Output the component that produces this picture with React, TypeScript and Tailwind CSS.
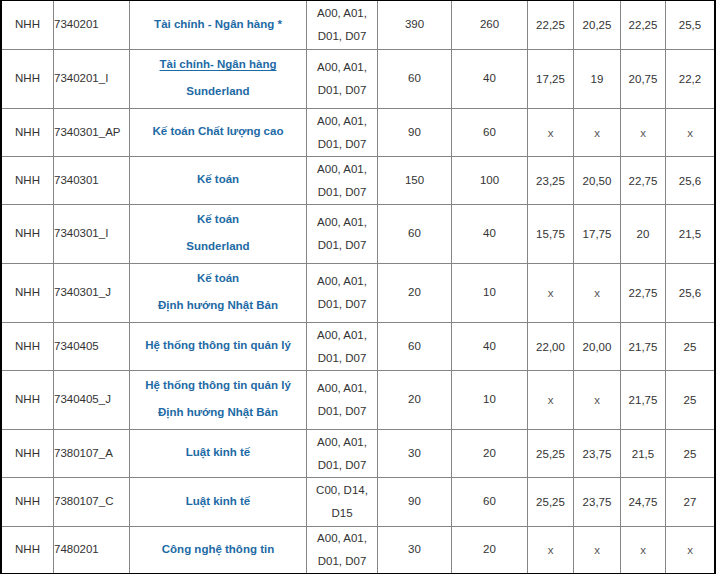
import React from "react";

type Row = {
  code: string;
  title: string[];
  underline?: boolean;
  combo: string[];
  quota: string;
  quota2: string;
  scores: string[];
  h: string;
};

const rows: Row[] = [
  { code: "7340201", title: ["Tài chính - Ngân hàng *"], combo: ["A00, A01,", "D01, D07"], quota: "390", quota2: "260", scores: ["22,25", "20,25", "22,25", "25,5"], h: "h-[49px]" },
  { code: "7340201_I", title: ["Tài chính- Ngân hàng", "Sunderland"], underline: true, combo: ["A00, A01,", "D01, D07"], quota: "60", quota2: "40", scores: ["17,25", "19", "20,75", "22,2"], h: "h-[59px]" },
  { code: "7340301_AP", title: ["Kế toán Chất lượng cao"], combo: ["A00, A01,", "D01, D07"], quota: "90", quota2: "60", scores: ["x", "x", "x", "x"], h: "h-[48px]" },
  { code: "7340301", title: ["Kế toán"], combo: ["A00, A01,", "D01, D07"], quota: "150", quota2: "100", scores: ["23,25", "20,50", "22,75", "25,6"], h: "h-[48px]" },
  { code: "7340301_I", title: ["Kế toán", "Sunderland"], combo: ["A00, A01,", "D01, D07"], quota: "60", quota2: "40", scores: ["15,75", "17,75", "20", "21,5"], h: "h-[59px]" },
  { code: "7340301_J", title: ["Kế toán", "Định hướng Nhật Bản"], combo: ["A00, A01,", "D01, D07"], quota: "20", quota2: "10", scores: ["x", "x", "22,75", "25,6"], h: "h-[59px]" },
  { code: "7340405", title: ["Hệ thống thông tin quản lý"], combo: ["A00, A01,", "D01, D07"], quota: "60", quota2: "40", scores: ["22,00", "20,00", "21,75", "25"], h: "h-[48px]" },
  { code: "7340405_J", title: ["Hệ thống thông tin quản lý", "Định hướng Nhật Bản"], combo: ["A00, A01,", "D01, D07"], quota: "20", quota2: "10", scores: ["x", "x", "21,75", "25"], h: "h-[59px]" },
  { code: "7380107_A", title: ["Luật kinh tế"], combo: ["A00, A01,", "D01, D07"], quota: "30", quota2: "20", scores: ["25,25", "23,75", "21,5", "25"], h: "h-[48px]" },
  { code: "7380107_C", title: ["Luật kinh tế"], combo: ["C00, D14,", "D15"], quota: "90", quota2: "60", scores: ["25,25", "23,75", "24,75", "27"], h: "h-[49px]" },
  { code: "7480201", title: ["Công nghệ thông tin"], combo: ["A00, A01,", "D01, D07"], quota: "30", quota2: "20", scores: ["x", "x", "x", "x"], h: "h-[46px]" },
];

const scoreW = ["w-[76px]", "w-[46px]", "w-[47px]", "w-[45px]"];

export default function App() {
  return (
    <div className="w-[716px] h-[574px] bg-white border-l-2 border-r-2 border-t border-b border-black font-['Liberation_Sans',Arial,sans-serif] text-[11.5px] text-[#333] overflow-hidden">
      {rows.map((r, i) => {
        const last = i === rows.length - 1;
        return (
          <div key={r.code} className={`flex ${r.h} ${last ? "" : "border-b border-[#858585]"}`}>
            <div className="w-[52px] shrink-0 border-r border-[#858585] flex items-center justify-center">NHH</div>
            <div className="w-[76px] shrink-0 border-r border-[#858585] flex items-center">{r.code}</div>
            <div className="w-[177px] shrink-0 border-r border-[#858585] flex flex-col items-center justify-center font-bold text-[#1d6aa5] leading-[27px] pb-[2px]">
              {r.title.map((t, j) => (
                <span key={j} className={r.underline && j === 0 ? "underline underline-offset-2" : ""}>
                  {t}
                </span>
              ))}
            </div>
            <div className="w-[71px] shrink-0 border-r border-[#858585] flex flex-col items-center justify-center leading-[23px]">
              {r.combo.map((c, j) => (
                <span key={j}>{c}</span>
              ))}
            </div>
            <div className="w-[74px] shrink-0 border-r border-[#858585] flex items-center justify-center">{r.quota}</div>
            {[r.quota2, ...r.scores].map((s, j) => (
              <div
                key={j}
                className={`${j === 0 ? "w-[76px]" : scoreW[j]} ${j === 0 ? "" : "pt-[2px]"} shrink-0 ${j === 4 ? "flex-1" : "border-r border-[#858585]"} flex items-center justify-center ${s === "x" ? "text-[#555]" : ""}`}
              >
                {s}
              </div>
            ))}
          </div>
        );
      })}
    </div>
  );
}
